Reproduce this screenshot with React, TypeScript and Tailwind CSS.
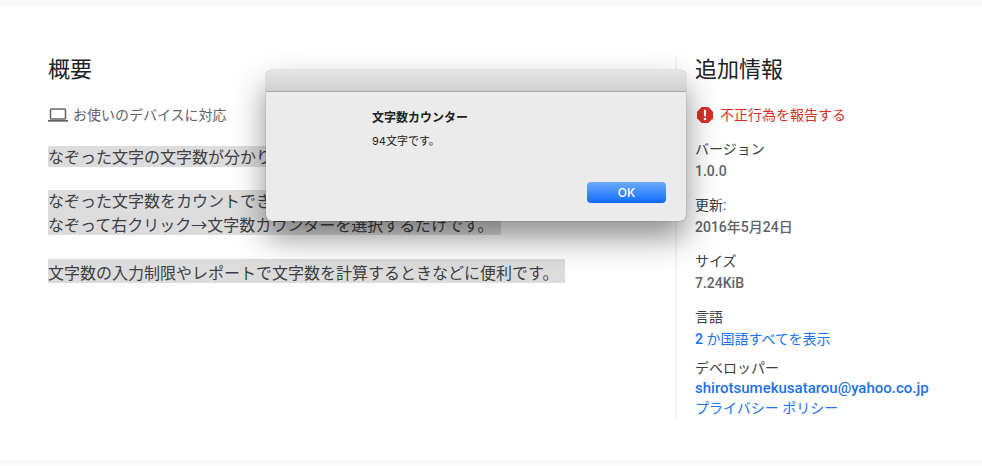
import React from "react";

/* ---------- Data ---------- */
type Detail = {
  label: string;
  value: React.ReactNode;
};

const details: Detail[] = [
  { label: "バージョン", value: "1.0.0" },
  { label: "更新:", value: "2016年5月24日" },
  { label: "サイズ", value: "7.24KiB" },
];

/* ---------- Icons ---------- */
function LaptopIcon() {
  return (
    <svg viewBox="0 0 20 14" className="h-3.5 w-5 shrink-0" fill="none" aria-hidden="true">
      <rect x="2.5" y="0.9" width="15" height="10.2" rx="1" stroke="#5f6368" strokeWidth="1.5" />
      <path d="M0 12h20v1.7H0z" fill="#5f6368" />
    </svg>
  );
}

function ReportIcon() {
  return (
    <svg viewBox="3 3 18 18" className="h-4 w-4 shrink-0" aria-hidden="true">
      <path
        fill="#d93025"
        d="M15.73 3H8.27L3 8.27v7.46L8.27 21h7.46L21 15.73V8.27L15.73 3z"
      />
      <path fill="#fff" d="M10.8 6.2h2.4v7.3h-2.4z" />
      <circle cx="12" cy="16.5" r="1.5" fill="#fff" />
    </svg>
  );
}

/* ---------- Overview ---------- */
function Overview() {
  return (
    <section className="min-w-0 flex-1">
      <h2 className="text-[22px] leading-[26px] text-[#202124]">概要</h2>
      <div className="mt-[22px] flex h-5 items-center gap-[5px] text-sm text-[#5f6368]">
        <LaptopIcon />
        <span>お使いのデバイスに対応</span>
      </div>

      <div className="mt-[21px] text-base text-[#3c4043]">
        <p className="h-[21px] w-fit bg-[#dcdcdc] leading-6">
          なぞった文字の文字数が分かります。
        </p>
        <p className="mt-[23px] h-[21px] w-fit bg-[#dcdcdc] leading-6">
          なぞった文字数をカウントできます。
        </p>
        <p className="h-6 w-fit bg-[#dcdcdc] pr-[7px] leading-[30px]">
          なぞって右クリック→文字数カウンターを選択するだけです。
        </p>
        <p className="mt-6 h-6 w-fit bg-[#dcdcdc] pr-[7px] leading-[30px]">
          文字数の入力制限やレポートで文字数を計算するときなどに便利です。
        </p>
      </div>
    </section>
  );
}

/* ---------- Additional info ---------- */
function AdditionalInfo() {
  return (
    <aside className="w-[307px] shrink-0 border-l-2 border-[#f1f3f4] pl-[18px] text-sm text-[#3c4043]">
      <h2 className="text-[22px] leading-[26px] text-[#202124]">追加情報</h2>
      <a href="#report" className="mt-[22px] flex h-5 items-center gap-[7px] pl-0.5 text-[#d93025]">
        <ReportIcon />
        不正行為を報告する
      </a>

      <dl className="mt-[13px]">
        {details.map((d) => (
          <div key={d.label} className="mb-3">
            <dt className="leading-[22px]">{d.label}</dt>
            <dd className="font-medium leading-[22px] text-[#5f6368]">{d.value}</dd>
          </div>
        ))}
        <div className="mb-2">
          <dt className="leading-[22px]">言語</dt>
          <dd className="leading-[22px]">
            <a href="#languages" className="text-[#1a73e8]">
              <span className="font-medium">2</span> か国語すべてを表示
            </a>
          </dd>
        </div>
        <div>
          <dt className="leading-5">デベロッパー</dt>
          <dd className="flex flex-col leading-5 text-[#1a73e8]">
            <a href="mailto:shirotsumekusatarou@yahoo.co.jp" className="text-[15px] font-medium leading-5">
              shirotsumekusatarou@yahoo.co.jp
            </a>
            <a href="#privacy">プライバシー ポリシー</a>
          </dd>
        </div>
      </dl>
    </aside>
  );
}

/* ---------- Alert ---------- */
function CounterDialog() {
  return (
    <div
      role="alertdialog"
      aria-labelledby="counter-title"
      aria-describedby="counter-text"
      className="absolute left-[266px] top-[70px] w-[420px] overflow-hidden rounded-md bg-[#ebebeb] font-['Inter','Noto_Sans_CJK_JP',sans-serif] shadow-[0_0_1px_rgba(0,0,0,0.6),0_16px_32px_rgba(0,0,0,0.45)]"
    >
      <div className="h-[22px] border-b border-[#a8a8a8] bg-linear-to-b from-[#e6e6e6] to-[#cfcfcf]" />
      <div className="pb-[18px] pl-[106px] pr-5 pt-4 text-[#222222]">
        <h3 id="counter-title" className="text-xs font-bold leading-5">
          文字数カウンター
        </h3>
        <p id="counter-text" className="mt-[3px] text-[11px] leading-5">
          94文字です。
        </p>
        <div className="mt-[31px] flex justify-end">
          <button
            type="button"
            className="h-[21px] w-[79px] rounded bg-linear-to-b from-[#6cabfa] to-[#0a68ff] text-xs font-medium leading-5 text-white"
          >
            OK
          </button>
        </div>
      </div>
    </div>
  );
}

export default function App() {
  return (
    <div className="relative min-h-screen bg-[#fafafa] pt-[7px] font-['Roboto','Noto_Sans_CJK_JP',sans-serif]">
      <main className="flex bg-white pb-[41px] pl-12 pt-[50px]">
        <Overview />
        <AdditionalInfo />
      </main>
      <CounterDialog />
    </div>
  );
}
